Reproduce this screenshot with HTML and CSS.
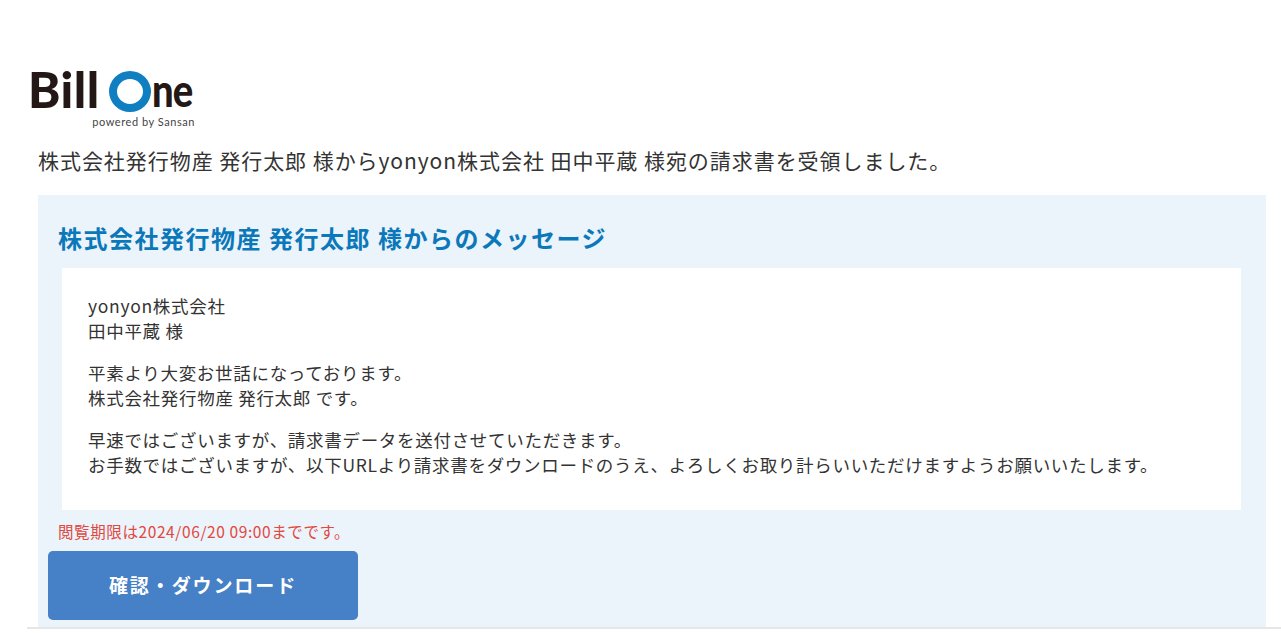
FILE: index.html
```html
<!DOCTYPE html>
<html lang="ja">
<head>
<meta charset="utf-8">
<title>Bill One</title>
<link rel="stylesheet" href="styles.css">
</head>
<body>
<div class="page">
  <header class="logo">
    <div class="logo-main"><span class="logo-bill">Bill</span><i class="logo-o"></i><span class="logo-ne">ne</span></div>
    <div class="logo-sub">powered by Sansan</div>
  </header>
  <p class="lead">株式会社発行物産 発行太郎 様からyonyon株式会社 田中平蔵 様宛の請求書を受領しました。</p>
  <section class="panel">
    <h2 class="title">株式会社発行物産 発行太郎 様からのメッセージ</h2>
    <div class="message">
      <p>yonyon株式会社<br>田中平蔵 様</p>
      <p>平素より大変お世話になっております。<br>株式会社発行物産 発行太郎 です。</p>
      <p>早速ではございますが、請求書データを送付させていただきます。<br>お手数ではございますが、以下URLより請求書をダウンロードのうえ、よろしくお取り計らいいただけますようお願いいたします。</p>
    </div>
    <p class="limit">閲覧期限は2024/06/20 09:00までです。</p>
    <a class="button">確認・ダウンロード</a>
  </section>
  <div class="rule"></div>
</div>
</body>
</html>
```
FILE: styles.css
```css
html, body { margin: 0; padding: 0; background: #fff; overflow: hidden; }
body { font-family: "Noto Sans CJK JP", "Noto Sans", sans-serif; color: #333; }
.page { width: 1281px; height: 633px; padding-top: 71px; box-sizing: border-box; }
.logo { margin-left: 28px; width: 167px; height: 57px; display: flex; flex-direction: column; }
.logo-main { display: flex; align-items: center; height: 42px; font-family: "Lato", sans-serif; font-weight: 900; color: #231815; }
.logo-bill { font-size: 49px; line-height: 42px; letter-spacing: 0.5px; margin-top: -5px; }
.logo-ne { font-size: 46px; line-height: 42px; letter-spacing: -1px; margin-top: -3px; transform: scaleX(0.83); transform-origin: left center; }
.logo-o { width: 42px; height: 41px; box-sizing: border-box; border: 8px solid #0f7fc1; border-radius: 50%; margin: 0 1px 0 9px; flex: none; }
.logo-sub { font-family: "Lato", sans-serif; font-size: 11px; line-height: 12px; letter-spacing: 0.55px; color: #444; text-align: right; margin-top: 4px; white-space: nowrap; }
.lead { margin: 19px 0 0 38px; font-size: 21px; line-height: 26px; letter-spacing: 0.95px; color: #333; white-space: nowrap; }
.panel { margin: 22px 0 0 38px; width: 1228px; height: 432px; background: #ebf3fb; box-sizing: border-box; padding: 26px 25px 0 10px; }
.title { margin: 0 0 0 10px; font-size: 24px; line-height: 34px; font-weight: 700; color: #0b78ba; letter-spacing: 1.5px; white-space: nowrap; }
.message { margin: 13px 0 0 14px; height: 242px; background: #fff; box-sizing: border-box; padding: 25px 26px 0; font-size: 17.5px; line-height: 25px; letter-spacing: 0.7px; color: #333; }
.message p { margin: 0 0 17px; white-space: nowrap; }
.limit { margin: 11px 0 0 10px; font-size: 15.5px; line-height: 20px; letter-spacing: 0.6px; color: #e2483d; white-space: nowrap; }
.button { display: flex; align-items: center; justify-content: center; margin-top: 10px; width: 310px; height: 69px; padding-bottom: 3px; box-sizing: border-box; background: #4680c6; border-radius: 5px; color: #fff; font-size: 19px; font-weight: 700; letter-spacing: 1.9px; }
.rule { margin: 0 0 0 27px; height: 2px; background: #e4e6e8; }
```
